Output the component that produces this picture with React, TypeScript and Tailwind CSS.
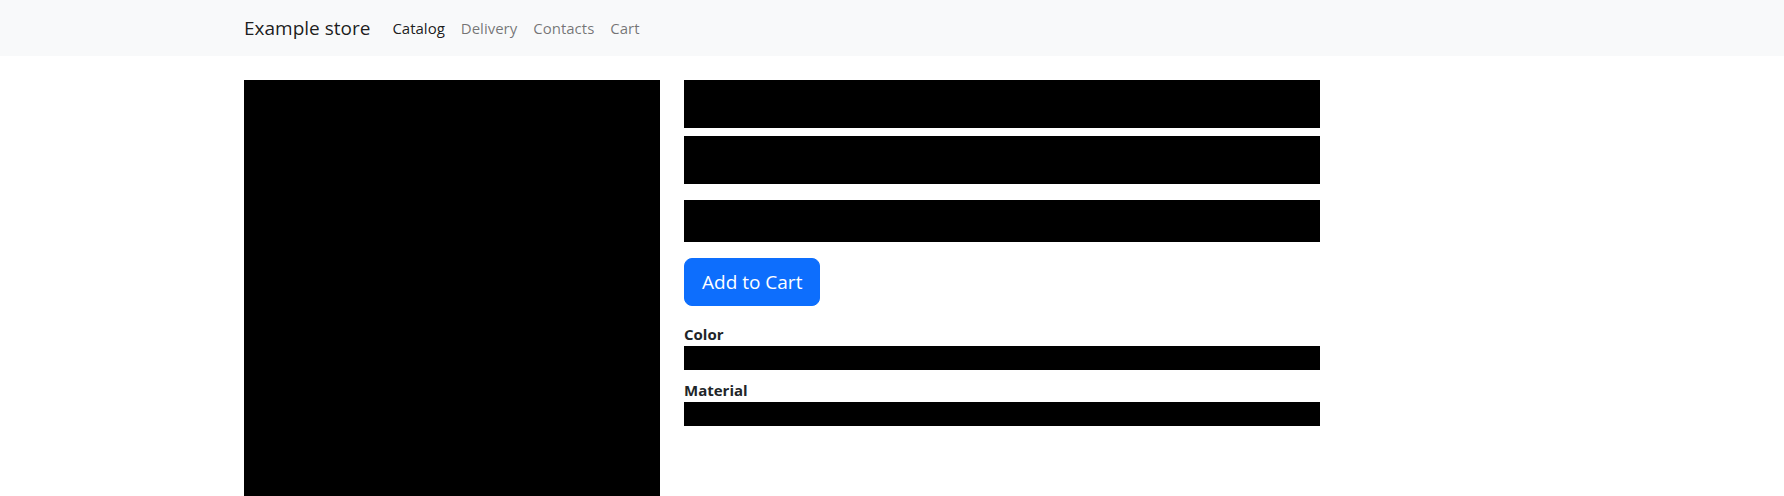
const links = [
  { label: "Catalog", href: "#catalog", active: true },
  { label: "Delivery", href: "#delivery", active: false },
  { label: "Contacts", href: "#contacts", active: false },
  { label: "Cart", href: "#cart", active: false },
];

const specs = ["Color", "Material"];

function Navbar() {
  return (
    <header className="bg-[#f8f9fa] py-2">
      <div className="mx-auto flex max-w-[1320px] items-center px-3">
        <a href="#home" className="mr-3.5 py-1 text-[19px] leading-8 text-black/90">
          Example store
        </a>
        <nav className="flex text-[15px] leading-6">
          {links.map((link) => (
            <a
              key={link.label}
              href={link.href}
              aria-current={link.active ? "page" : undefined}
              className={link.active ? "p-2 text-black/90" : "p-2 text-black/55"}
            >
              {link.label}
            </a>
          ))}
        </nav>
      </div>
    </header>
  );
}

export default function App() {
  return (
    <div className="min-h-screen bg-white font-['Open_Sans','Noto_Sans',sans-serif] text-[#212529]">
      <Navbar />
      <main className="mx-auto grid max-w-[1320px] grid-cols-12 gap-6 px-3 pt-6">
        <div className="col-span-4 aspect-square bg-black" />
        <section className="col-span-6">
          <div className="mb-2 h-12 bg-black" />
          <div className="mb-4 h-12 bg-black" />
          <div className="mb-4 h-[42px] bg-black" />
          <button
            type="button"
            className="rounded-lg border border-[#0d6efd] bg-[#0d6efd] px-[17px] py-2 text-[19px] leading-[30px] text-white"
          >
            Add to Cart
          </button>
          <dl className="mt-4 text-[15px] leading-6">
            {specs.map((name) => (
              <div key={name} className="mb-2">
                <dt className="font-bold">{name}</dt>
                <dd className="h-6 bg-black" />
              </div>
            ))}
          </dl>
        </section>
      </main>
    </div>
  );
}
